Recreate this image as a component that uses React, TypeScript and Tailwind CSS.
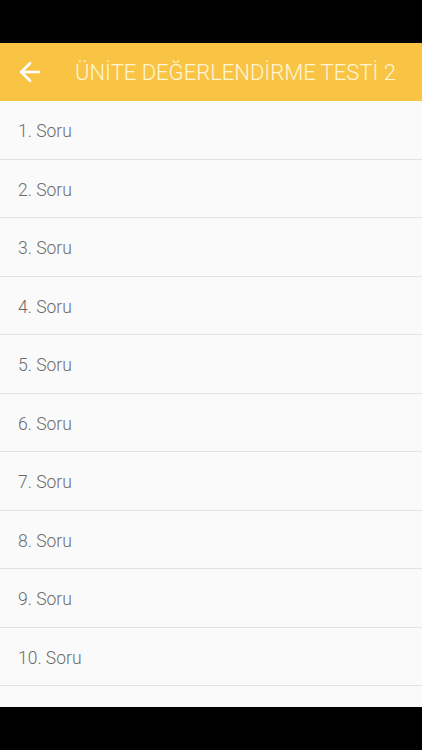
import { ArrowLeft } from 'lucide-react';

const questions = Array.from({ length: 10 }, (_, i) => `${i + 1}. Soru`);

export default function App() {
  return (
    <div className="w-[422px] h-[750px] flex flex-col bg-black overflow-hidden font-['Roboto',sans-serif]">
      <div className="h-[43px] shrink-0 bg-black" />
      <header className="h-[58px] shrink-0 flex items-center bg-[#f9c444]">
        <button className="w-[75px] h-full flex items-center pl-[15px] text-white">
          <ArrowLeft size={30} strokeWidth={2.1} />
        </button>
        <h1 className="text-[22px] font-light text-[#fff6d6] whitespace-nowrap pt-[1px]">
          ÜNİTE DEĞERLENDİRME TESTİ 2
        </h1>
      </header>
      <div className="h-[606px] shrink-0 bg-[#fafafa] overflow-hidden">
        {questions.map((q) => (
          <div
            key={q}
            className="h-[58.5px] flex items-center px-[18px] pt-[3px] border-b border-[#e2e2e2] text-[17.5px] font-light text-[#6b6b6b]"
          >
            {q}
          </div>
        ))}
        {/* next row is cut off by the bottom bar */}
        <div className="h-[58.5px] border-b border-[#e2e2e2]" />
      </div>
      <div className="flex-1 bg-black" />
    </div>
  );
}
